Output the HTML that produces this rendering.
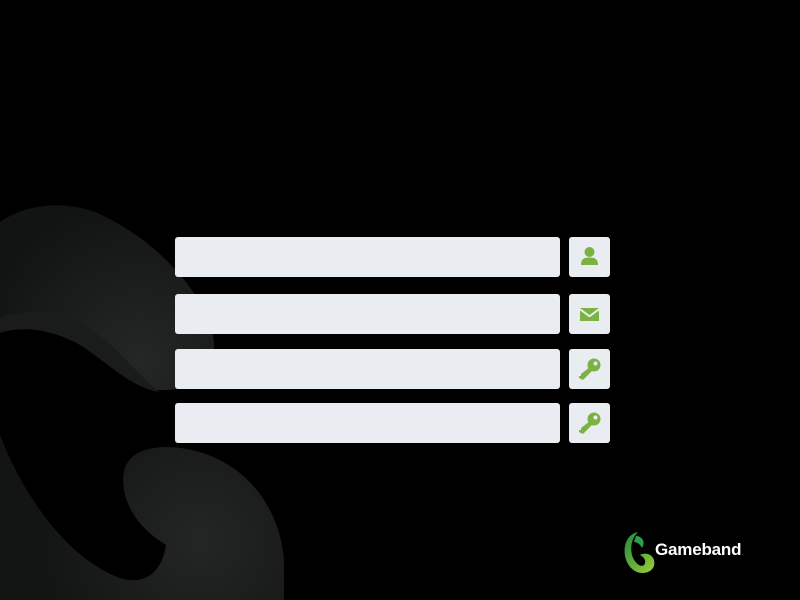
<!DOCTYPE html>
<html><head><style>
body{margin:0;width:800px;height:600px;background:#000;overflow:hidden;position:relative;font-family:"Liberation Sans",sans-serif}
.f{position:absolute;left:175px;width:385px;height:40px;background:#e9ecf0;border-radius:3px}
.i{position:absolute;left:569px;width:41px;height:40px;background:#e9ecf0;border-radius:3px}
.i svg{position:absolute;left:0;top:0}
</style></head><body>
<svg width="800" height="600" style="position:absolute;left:0;top:0">
<defs>
<radialGradient id="g1" cx="140" cy="360" r="160" gradientUnits="userSpaceOnUse"><stop offset="0" stop-color="#252626"/><stop offset="1" stop-color="#121313"/></radialGradient>
<radialGradient id="g2" cx="200" cy="540" r="160" gradientUnits="userSpaceOnUse"><stop offset="0" stop-color="#242525"/><stop offset="1" stop-color="#131414"/></radialGradient>
</defs>
<path d="M0 222 C25 205 60 200 95 212 C160 240 210 300 214 342 C216 375 190 392 158 390 C125 385 95 350 60 333 C35 322 15 320 0 326 Z" fill="url(#g1)"/>
<path d="M0 318 C35 305 75 315 105 340 C128 360 145 382 160 392 C130 388 105 360 80 345 C50 328 20 326 0 333 Z" fill="#1a1b1b"/>
<path d="M0 435 C25 500 70 560 120 578 C145 586 162 572 166 545 C150 535 132 520 125 495 C118 465 130 448 165 447 C225 447 278 490 284 560 L284 600 L0 600 Z" fill="url(#g2)"/>
</svg>
<div class="f" style="top:237px"></div><div class="i" style="top:237px"><svg width="41" height="40"><circle cx="20.5" cy="15" r="5" fill="#7bb241"/><path d="M12 28 C12 22 15 20.5 20.5 20.5 C26 20.5 29 22 29 28Z" fill="#7bb241"/></svg></div>
<div class="f" style="top:294px"></div><div class="i" style="top:294px"><svg width="41" height="40"><path d="M11 14 L30 14 L20.5 21 Z" fill="#7bb241"/><path d="M11 16.5 L20.5 23.5 L30 16.5 L30 27 L11 27 Z" fill="#7bb241"/></svg></div>
<div class="f" style="top:349px"></div><div class="i" style="top:349px"><svg width="41" height="40"><circle cx="25" cy="16" r="6.5" fill="#7bb241"/><circle cx="26.5" cy="14.5" r="2" fill="#e9ecf0"/><path d="M21 18 L24 21 L14 31 L10 29 L10 27 L12 27 L12 25 Z" fill="#7bb241"/></svg></div>
<div class="f" style="top:403px"></div><div class="i" style="top:403px"><svg width="41" height="40"><circle cx="25" cy="16" r="6.5" fill="#7bb241"/><circle cx="26.5" cy="14.5" r="2" fill="#e9ecf0"/><path d="M21 18 L24 21 L14 31 L10 29 L10 27 L12 27 L12 25 Z" fill="#7bb241"/></svg></div>
<svg width="40" height="50" style="position:absolute;left:620px;top:528px"><defs><linearGradient id="lg" x1="0" y1="0" x2="1" y2="1"><stop offset="0" stop-color="#1f8a3a"/><stop offset="1" stop-color="#9ccc3c"/></linearGradient></defs>
<path d="M18 4 C8 6 3 16 5 28 C7 38 14 45 22 45 C30 45 36 40 34 32 C32 26 25 24 20 27 C24 29 27 33 24 37 C20 40 14 34 12 27 C10 18 12 10 18 4Z" fill="url(#lg)"/><path d="M16 8 C22 8 26 14 22 20 C20 16 17 14 14 14Z" fill="#2aa04a"/></svg>
<div style="position:absolute;left:655px;top:540px;color:#fff;font-weight:bold;font-size:17px;letter-spacing:-0.2px">Gameband</div>
</body></html>
